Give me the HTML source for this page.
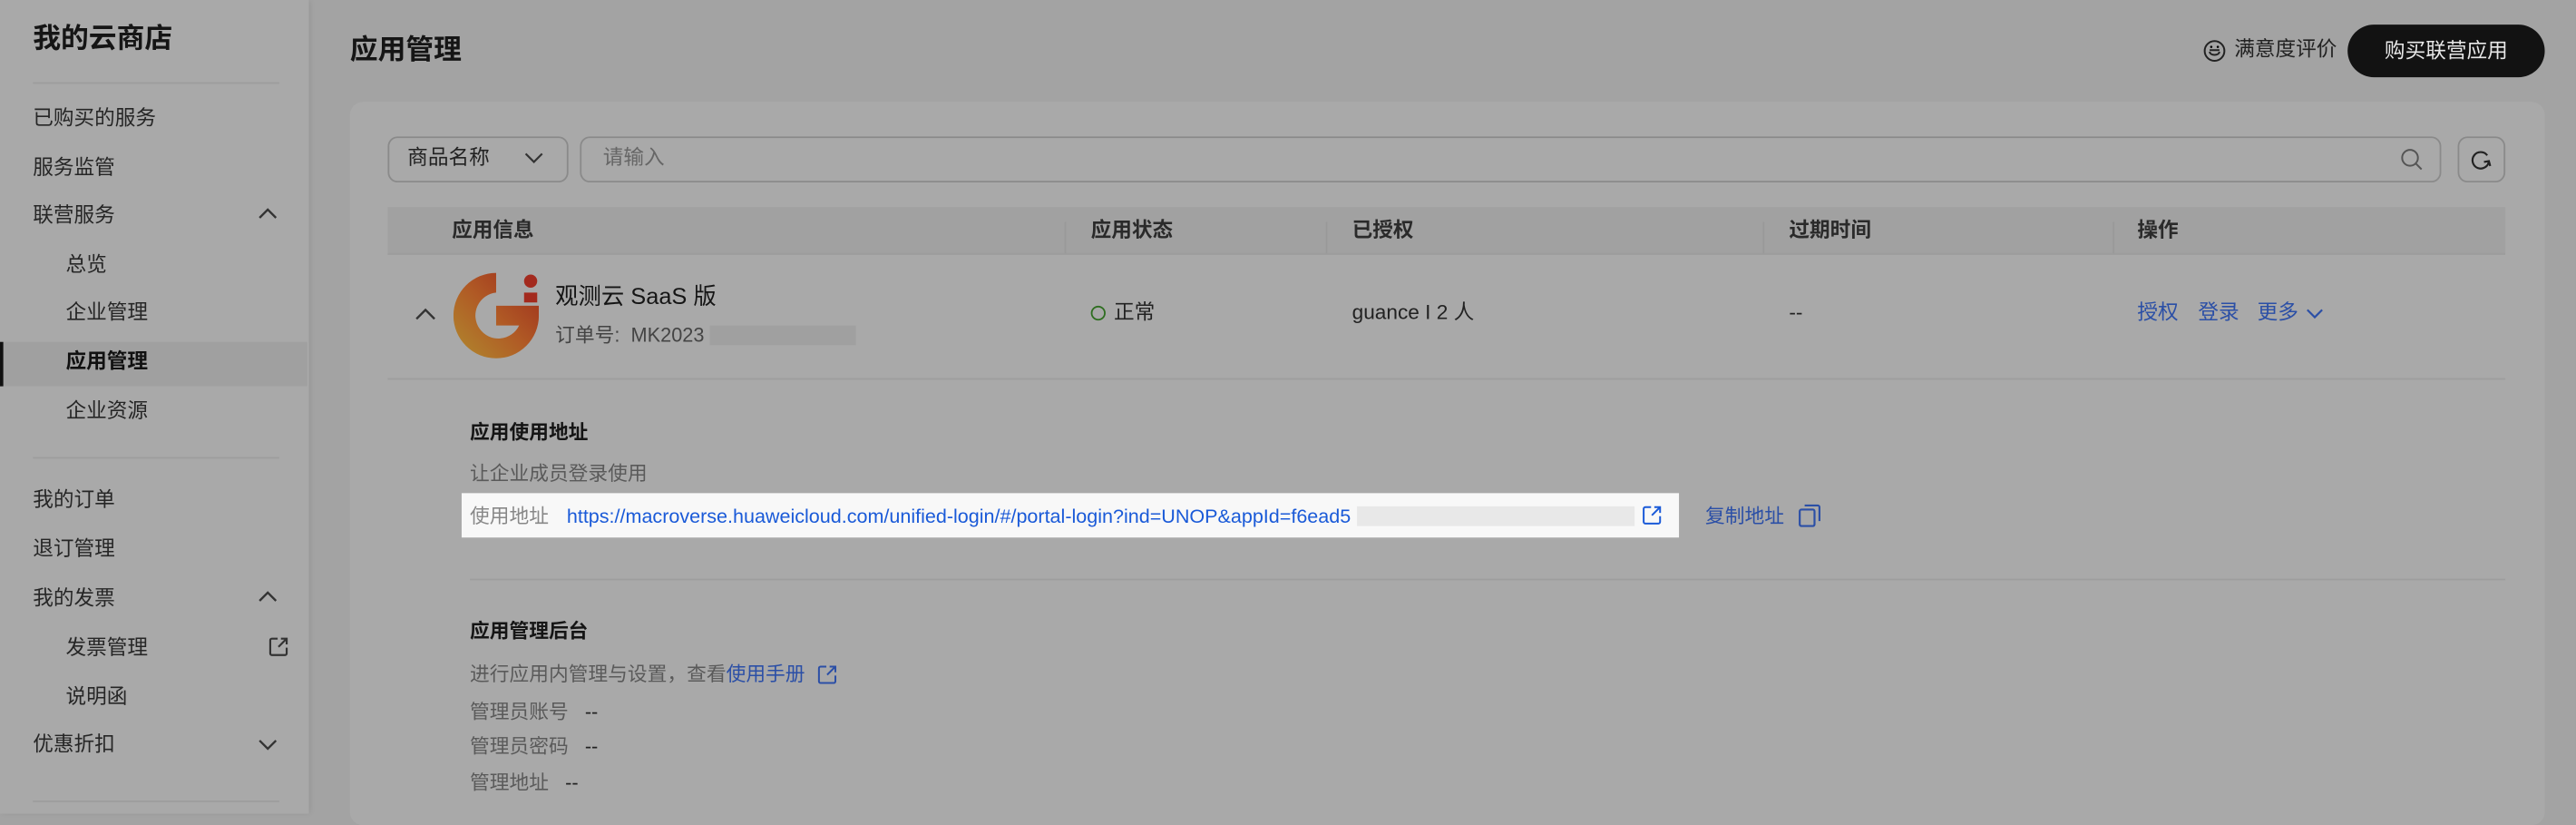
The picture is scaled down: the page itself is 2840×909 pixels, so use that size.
<!DOCTYPE html>
<html><head><meta charset="utf-8"><style>
*{margin:0;padding:0;box-sizing:border-box}
html,body{width:2840px;height:896px;overflow:hidden;background:#a3a3a3}
#w{position:absolute;left:0;top:0;width:1568px;height:495px;transform:scale(1.8112);transform-origin:0 0;font-family:"Liberation Sans","Noto Sans CJK SC",sans-serif;color:#1c1c1c;background:#a3a3a3;line-height:1.2}
.a{position:absolute;white-space:nowrap}
.sb{position:absolute;left:0;top:0;width:188px;height:495px;background:#a9a9a9;box-shadow:1px 0 3px rgba(0,0,0,.08)}
.mi{position:absolute;left:20px;font-size:12.5px;color:#262626;line-height:16px}
.sub{left:40px}
.chev{position:absolute;left:157px;width:12px;height:12px}
.g{color:#5a5a5a}
.b{color:#2b4fa6}
.hd{position:absolute;top:126px;height:29px;left:236px;width:1289px;background:#a1a1a1;border-bottom:1px solid #9c9c9c}
.hd span{position:absolute;top:7px;font-size:12.5px;font-weight:bold;color:#2a2a2a}
.sep{position:absolute;top:9px;width:1px;height:19px;background:#999}
</style></head><body><div id="w">
<div class="sb">
 <div class="a" style="left:20px;top:14px;font-size:17px;font-weight:bold;color:#151515">我的云商店</div>
 <div class="a" style="left:20px;top:50px;width:150px;height:1px;background:#9d9d9d"></div>
 <div class="mi" style="top:64px">已购买的服务</div>
 <div class="mi" style="top:94px">服务监管</div>
 <div class="mi" style="top:123px">联营服务</div>
 <svg class="chev" style="top:124px" viewBox="0 0 12 12"><path d="M1 8.5L6 3.5L11 8.5" fill="none" stroke="#333" stroke-width="1.3"/></svg>
 <div class="mi sub" style="top:153px">总览</div>
 <div class="mi sub" style="top:182px">企业管理</div>
 <div class="a" style="left:0;top:208px;width:187px;height:27px;background:#a0a0a0;border-left:2px solid #111"></div>
 <div class="mi sub" style="top:212px;font-weight:bold;color:#111">应用管理</div>
 <div class="mi sub" style="top:242px">企业资源</div>
 <div class="a" style="left:20px;top:278px;width:150px;height:1px;background:#9d9d9d"></div>
 <div class="mi" style="top:296px">我的订单</div>
 <div class="mi" style="top:326px">退订管理</div>
 <div class="mi" style="top:356px">我的发票</div>
 <svg class="chev" style="top:357px" viewBox="0 0 12 12"><path d="M1 8.5L6 3.5L11 8.5" fill="none" stroke="#333" stroke-width="1.3"/></svg>
 <div class="mi sub" style="top:386px">发票管理</div>
 <svg class="a" style="left:163px;top:387px;width:13px;height:13px" viewBox="0 0 13 13"><path d="M6 1.5H2.5a1 1 0 0 0-1 1v8a1 1 0 0 0 1 1h8a1 1 0 0 0 1-1V7M8 1.5h3.5V5M11.5 1.5L6.5 6.5" fill="none" stroke="#333" stroke-width="1.2"/></svg>
 <div class="mi sub" style="top:416px">说明函</div>
 <div class="mi" style="top:445px">优惠折扣</div>
 <svg class="chev" style="top:447px" viewBox="0 0 12 12"><path d="M1 3.5L6 8.5L11 3.5" fill="none" stroke="#333" stroke-width="1.3"/></svg>
 <div class="a" style="left:20px;top:487px;width:150px;height:1px;background:#9d9d9d"></div>
</div>

<div class="a" style="left:213px;top:21px;font-size:17px;font-weight:bold;color:#151515">应用管理</div>
<svg class="a" style="left:1341px;top:24px;width:14px;height:14px" viewBox="0 0 14 14"><circle cx="7" cy="7" r="6" fill="none" stroke="#222" stroke-width="1.1"/><path d="M4 6.5h6M4 7.5c.5 2.5 5.5 2.5 6 0" fill="none" stroke="#222" stroke-width="1.1"/><circle cx="5" cy="4.5" r=".7"/><circle cx="9" cy="4.5" r=".7"/></svg>
<div class="a" style="left:1360px;top:23px;font-size:12.5px;color:#222">满意度评价</div>
<div class="a" style="left:1429px;top:15px;width:120px;height:32px;border-radius:16px;background:#121212;color:#e8e8e8;font-size:12.5px;text-align:center;line-height:32px">购买联营应用</div>

<div class="a" style="left:213px;top:62px;width:1336px;height:440px;border-radius:8px;background:#a9a9a9"></div>
<div class="a" style="left:236px;top:83px;width:110px;height:28px;border:1px solid #8a8a8a;border-radius:6px"></div>
<div class="a" style="left:248px;top:89px;font-size:12.5px;color:#222">商品名称</div>
<svg class="a" style="left:319px;top:91px;width:12px;height:10px" viewBox="0 0 12 10"><path d="M1 2.5L6 7.5L11 2.5" fill="none" stroke="#333" stroke-width="1.2"/></svg>
<div class="a" style="left:353px;top:83px;width:1133px;height:28px;border:1px solid #8a8a8a;border-radius:6px"></div>
<div class="a" style="left:367px;top:89px;font-size:12.5px;color:#666">请输入</div>
<svg class="a" style="left:1461px;top:90px;width:14px;height:14px" viewBox="0 0 14 14"><circle cx="6" cy="6" r="4.8" fill="none" stroke="#555" stroke-width="1.1"/><path d="M9.5 9.5L13 13" stroke="#555" stroke-width="1.1"/></svg>
<div class="a" style="left:1496px;top:83px;width:29px;height:28px;border:1px solid #8a8a8a;border-radius:6px"></div>
<svg class="a" style="left:1503px;top:90px;width:14px;height:14px" viewBox="0 0 14 14"><path d="M11 4.5A5 5 0 1 0 12 8" fill="none" stroke="#222" stroke-width="1.2"/><path d="M9 8.5l3 -.5 .8 3" fill="none" stroke="#222" stroke-width="1.2"/></svg>

<div class="hd">
 <span style="left:39px">应用信息</span>
 <div class="sep" style="left:412px"></div><span style="left:428px">应用状态</span>
 <div class="sep" style="left:571px"></div><span style="left:587px">已授权</span>
 <div class="sep" style="left:837px"></div><span style="left:853px">过期时间</span>
 <div class="sep" style="left:1050px"></div><span style="left:1065px">操作</span>
</div>

<svg class="a" style="left:252px;top:186px;width:14px;height:10px" viewBox="0 0 14 10"><path d="M1.5 8L7 2.5L12.5 8" fill="none" stroke="#333" stroke-width="1.3"/></svg>
<svg class="a" style="left:276px;top:166px;width:52px;height:52px" viewBox="0 0 52 52">
 <defs><linearGradient id="lg" x1="0" y1="1" x2="1" y2="0"><stop offset="0" stop-color="#b08a2e"/><stop offset=".5" stop-color="#b05a25"/><stop offset="1" stop-color="#9c2a1c"/></linearGradient></defs>
 <path d="M26 0A26 26 0 1 0 52 26V20H26V32H40A14 14 0 1 1 26 12V0Z" fill="url(#lg)"/>
 <circle cx="47" cy="5" r="4" fill="#a32a1e"/>
 <rect x="43" y="12" width="8" height="6" fill="#a32a1e"/>
</svg>
<div class="a" style="left:338px;top:172px;font-size:14px;color:#151515">观测云 SaaS 版</div>
<div class="a" style="left:338px;top:197px;font-size:12px;color:#444">订单号:&nbsp;&nbsp;MK2023</div>
<div class="a" style="left:432px;top:198px;width:89px;height:12px;background:#a0a0a0"></div>
<div class="a" style="left:664px;top:186px;width:9px;height:9px;border-radius:50%;border:1.5px solid #2e6e20"></div>
<div class="a" style="left:678px;top:183px;font-size:12.5px;color:#222">正常</div>
<div class="a" style="left:823px;top:183px;font-size:12.5px;color:#222">guance I 2 人</div>
<div class="a" style="left:1089px;top:183px;font-size:12.5px;color:#222">--</div>
<div class="a b" style="left:1301px;top:183px;font-size:12.5px">授权</div>
<div class="a b" style="left:1338px;top:183px;font-size:12.5px">登录</div>
<div class="a b" style="left:1374px;top:183px;font-size:12.5px">更多</div>
<svg class="a" style="left:1403px;top:186px;width:12px;height:10px" viewBox="0 0 12 10"><path d="M1.5 2.5L6 7L10.5 2.5" fill="none" stroke="#2b4fa6" stroke-width="1.2"/></svg>
<div class="a" style="left:236px;top:230px;width:1289px;height:1px;background:#9e9e9e"></div>

<div class="a" style="left:286px;top:256px;font-size:12px;font-weight:bold;color:#151515">应用使用地址</div>
<div class="a g" style="left:286px;top:281px;font-size:12px">让企业成员登录使用</div>
<div class="a" style="left:281px;top:300px;width:741px;height:27px;background:#f8f8f8"></div>
<div class="a" style="left:286px;top:307px;font-size:12px;color:#888">使用地址</div>
<div class="a" style="left:345px;top:307px;font-size:11.9px;color:#1a5ad8">https://macroverse.huaweicloud.com/unified-login/#/portal-login?ind=UNOP&amp;appId=f6ead5</div>
<div class="a" style="left:826px;top:308px;width:169px;height:12px;background:#e8e8e8"></div>
<svg class="a" style="left:999px;top:307px;width:13px;height:13px" viewBox="0 0 13 13"><path d="M6 1.5H2.5a1 1 0 0 0-1 1v8a1 1 0 0 0 1 1h8a1 1 0 0 0 1-1V7M8 1.5h3.5V5M11.5 1.5L6.5 6.5" fill="none" stroke="#1a5ad8" stroke-width="1.1"/></svg>
<div class="a b" style="left:1038px;top:307px;font-size:12px">复制地址</div>
<svg class="a" style="left:1094px;top:306px;width:15px;height:15px" viewBox="0 0 15 15"><rect x="1.5" y="4" width="9" height="10" rx="1" fill="none" stroke="#2b4fa6" stroke-width="1.2"/><path d="M4.5 1.5H12.5a1 1 0 0 1 1 1V11" fill="none" stroke="#2b4fa6" stroke-width="1.2"/></svg>
<div class="a" style="left:286px;top:352px;width:1239px;height:1px;background:#9e9e9e"></div>

<div class="a" style="left:286px;top:377px;font-size:12px;font-weight:bold;color:#151515">应用管理后台</div>
<div class="a g" style="left:286px;top:403px;font-size:12px">进行应用内管理与设置，查看<span class="b">使用手册</span></div>
<svg class="a" style="left:497px;top:404px;width:13px;height:13px" viewBox="0 0 13 13"><path d="M6 1.5H2.5a1 1 0 0 0-1 1v8a1 1 0 0 0 1 1h8a1 1 0 0 0 1-1V7M8 1.5h3.5V5M11.5 1.5L6.5 6.5" fill="none" stroke="#2b4fa6" stroke-width="1.1"/></svg>
<div class="a g" style="left:286px;top:426px;font-size:12px">管理员账号&nbsp;&nbsp;&nbsp;<span style="color:#222">--</span></div>
<div class="a g" style="left:286px;top:447px;font-size:12px">管理员密码&nbsp;&nbsp;&nbsp;<span style="color:#222">--</span></div>
<div class="a g" style="left:286px;top:469px;font-size:12px">管理地址&nbsp;&nbsp;&nbsp;<span style="color:#222">--</span></div>
</div></body></html>
